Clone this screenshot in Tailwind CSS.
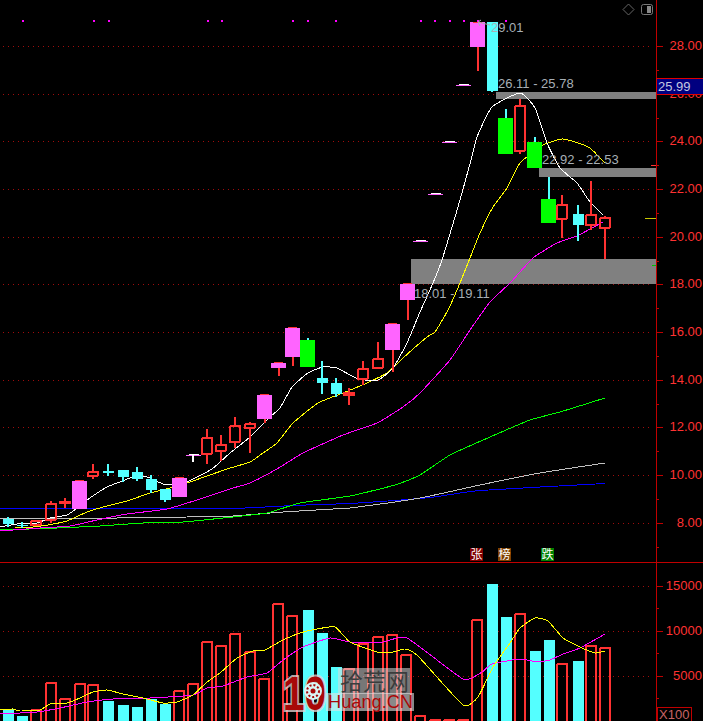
<!DOCTYPE html>
<html lang="zh">
<head>
  <meta charset="UTF-8">
  <title>K线图</title>
  <script src="https://cdn.jsdelivr.net/npm/@tailwindcss/browser@4"></script>
</head>
<body class="bg-black overflow-hidden">
  <div class="relative w-[703px] h-[721px] bg-black font-['Liberation_Sans','Noto_Sans_CJK_SC',sans-serif] text-[13px]">
    <svg id="chart" class="block" width="703" height="721" viewBox="0 0 703 721" xmlns="http://www.w3.org/2000/svg"></svg>
  </div>

  <script>
    const RED = '#ff3232', CYAN = '#54ffff', PINK = '#ff64ff', GREEN = '#00ff00';
    const AXIS = '#c00000', GRID = '#a00c0c', NOTE = '#a7afb6';

    // x, type, body top, body bottom, wick top, wick bottom
    const candles = [
      [8,'c',519,524,517,527],[22,'c',525,526,522,528],[36,'r',520,526,520,526],[51,'r',503,521,501,523],
      [65,'f',501,504,498,508],[79.5,'m',481,509,480,509],[93,'r',471,477,464,479],[108,'c',471,473,464,476],
      [122.5,'c',470,477,470,482],[136.5,'c',472,479,467,481],[150.5,'c',479,490,475,493],[164.5,'c',489,500,489,502],
      [179.5,'m',478,497,477,497],[207,'r',437,455,429,464],[221,'r',444,452,435,461],[235,'r',425,443,417,448],
      [250,'r',423,429,422,453],[264.5,'m',395,419,394,423],[278.5,'m',363,368,362,376],[292.5,'m',328,357,327,366],
      [307.5,'g',340,367,338,367],[321.5,'c',378,383,361,394],[335.5,'c',383,394,378,397],[349,'f',392,396,388,405],
      [363,'r',368,380,361,385],[378,'r',358,369,342,369],[392.5,'m',324,350,323,372],[407,'m',284,300,283,320],
      [477.5,'m',22,47,22,71],[491.5,'c',22,91,22,92],[505.5,'g',118,154,109,154],[520,'r',105,152,99,154],
      [534.5,'g',142,168,137,168],[548.5,'g',199,223,177,223],[562,'r',204,220,195,238],[577.5,'c',214,225,205,241],
      [591,'r',214,226,181,230],[605,'r',217,229,216,259]
    ];
    const dojis = [[193,455],[420.5,241],[435,194],[449.5,142],[463.5,85]];

    const lineWhite = [[0,527],[17,524],[37,523],[50,518],[67,515],[77,508],[87,500],[107,487],[120,482],[133,477],[147,477],[163,484],[172,484],[187,482],[212,469],[230,453],[250,437],[270,417],[280,408],[292,387],[308,373],[323,367],[337,368],[358,379],[378,380],[393,368],[407,343],[420,312],[433,283],[442,260],[452,227],[460,200],[471,160],[477,137],[492,107],[520,93],[535,108],[547,143],[560,168],[577,183],[590,202],[603,215]];
    const lineYellow = [[15,528],[33,527],[48,525],[67,521],[87,512],[107,506],[127,501],[150,493],[170,488],[190,482],[227,469],[250,462],[263,453],[277,443],[293,423],[318,403],[343,393],[367,383],[387,373],[403,358],[427,337],[435,332],[448,310],[460,283],[472,253],[480,233],[493,207],[507,188],[520,163],[543,145],[562,139],[575,142],[590,148],[605,163]];
    const linePink = [[0,531],[40,528],[70,526],[97,520],[127,514],[167,509],[200,499],[233,488],[250,483],[277,469],[303,453],[343,435],[377,423],[403,407],[420,393],[450,360],[470,330],[490,302],[510,283],[533,258],[557,243],[577,236],[603,222]];
    const lineGreen = [[0,530],[57,528],[100,526],[143,523],[183,522],[223,518],[267,513],[300,503],[350,496],[395,485],[420,475],[450,455],[490,437],[530,420],[560,412],[605,398]];
    const lineGrey = [[0,519],[117,518],[187,517],[233,516],[283,512],[333,509],[350,508],[420,498],[480,485],[540,473],[605,463]];
    const lineBlue = [[0,508.5],[227,508.5],[273,506.5],[317,504.5],[350,503.5],[430,497.5],[480,490.5],[605,483.5]];

    // x, type, top of volume bar
    const bars = [
      [8,'c',709],[22,'c',716],[36,'r',709],[51,'r',682],[65,'r',698],[79.5,'r',683],[93,'r',684],[108,'c',701],
      [122.5,'c',705],[136.5,'c',707],[150.5,'c',699],[164.5,'c',704],[179,'r',690],[193,'r',683],[207,'r',641],
      [221,'r',645],[235,'r',633],[250,'r',651],[264,'r',678],[278,'r',603],[292,'r',615],[307.5,'c',610],
      [321.5,'c',633],[335.5,'c',667],[349,'r',668],[363,'r',643],[378,'r',636],[392,'r',634],[406,'r',654],
      [420,'r',715],[435,'r',719],[449,'r',719],[463,'r',719],[477,'r',619],[491.5,'c',584],[505.5,'c',617],
      [520,'r',613],[534.5,'c',651],[548.5,'c',640],[562,'r',663],[577.5,'c',661],[591,'r',645],[605,'r',647]
    ];
    const volYellow = [[0,710],[13,709],[20,711],[40,710],[50,704],[67,703],[80,698],[93,692],[107,690],[123,694],[143,698],[163,703],[177,702],[193,695],[207,682],[220,673],[237,658],[253,651],[265,650],[283,640],[300,633],[317,629],[335,627],[350,642],[377,652],[393,652],[405,649],[418,656],[463,705],[478,697],[493,667],[510,643],[520,628],[535,618],[548,621],[563,638],[580,647],[595,653],[605,651]];
    const volPink = [[0,714],[37,712],[60,708],[87,702],[113,699],[150,698],[193,695],[207,688],[223,686],[247,677],[267,673],[283,660],[303,647],[330,638],[350,642],[383,642],[407,638],[463,679],[482,672],[492,664],[520,659],[537,662],[550,660],[563,654],[580,648],[605,634]];

    let s = '';
    const rect = (x, y, w, h, fill) => `<rect x="${x}" y="${y}" width="${w}" height="${h}" fill="${fill}" shape-rendering="crispEdges"/>`;
    const hollow = (x, y, w, h) => `<rect x="${x + 1}" y="${y + 1}" width="${w - 2}" height="${h - 2}" rx="1" fill="none" stroke="${RED}" stroke-width="2" shape-rendering="crispEdges"/>`;
    // lightly rounded through the points, drawn without antialiasing like the terminal does
    const poly = (pts, color) => {
      let d = `M${pts[0][0]} ${pts[0][1]}`;
      for (let i = 0; i < pts.length - 1; i++) {
        const p0 = pts[i - 1] || pts[i], p1 = pts[i], p2 = pts[i + 1], p3 = pts[i + 2] || p2;
        const c1 = [p1[0] + (p2[0] - p0[0]) / 12, p1[1] + (p2[1] - p0[1]) / 12];
        const c2 = [p2[0] - (p3[0] - p1[0]) / 12, p2[1] - (p3[1] - p1[1]) / 12];
        d += ` C${c1[0]} ${c1[1]} ${c2[0]} ${c2[1]} ${p2[0]} ${p2[1]}`;
      }
      return `<path d="${d}" fill="none" stroke="${color}" stroke-width="1" shape-rendering="crispEdges"/>`;
    };
    const text = (x, y, str, color, anchor) => `<text x="${x}" y="${y}" fill="${color}" text-anchor="${anchor || 'start'}">${str}</text>`;
    const grid = y => `<line x1="3" x2="650" y1="${y + 0.5}" y2="${y + 0.5}" stroke="${GRID}" stroke-dasharray="1 4" shape-rendering="crispEdges"/>`;

    // horizontal grid and right axis, price panel
    const prices = ['28.00','26.00','24.00','22.00','20.00','18.00','16.00','14.00','12.00','10.00','8.00'];
    prices.forEach((p, i) => {
      const y = Math.round(46 + i * 47.65);
      s += grid(y);
      s += rect(656, y, 7, 1, AXIS);
      s += rect(656, Math.round(y + 23.8), 3, 1, AXIS);
      s += text(702, y + 4, p, RED, 'end');
    });

    // volume panel
    [[586,'15000'],[631,'10000'],[676,'5000']].forEach(([y, v]) => {
      s += grid(y);
      s += rect(656, y, 7, 1, AXIS);
      s += rect(656, y + 22, 3, 1, AXIS);
      s += text(702, y + 4, v, RED, 'end');
    });

    // gaps
    s += rect(496, 92, 160, 7, '#808080');
    s += rect(539, 168, 117, 9, '#808080');
    s += rect(411, 259, 245, 25, '#808080');

    // moving averages
    s += poly(lineBlue, '#0000ff') + poly(lineGrey, '#c0c0c0') + poly(lineGreen, GREEN);
    s += poly(linePink, '#ff00ff') + poly(lineYellow, '#ffff00') + poly(lineWhite, '#ffffff');

    // candles
    candles.forEach(([x, t, top, bot, wt, wb]) => {
      if (t === 'r' || t === 'f') {
        const cx = Math.round(x);
        if (wt < top) s += rect(cx - 1, wt, 2, top - wt, RED);
        if (wb > bot) s += rect(cx - 1, bot, 2, wb - bot, RED);
        if (t === 'r') s += hollow(cx - 6, top, 12, bot - top);
        else s += rect(cx - 6, top, 12, bot - top, RED);
      } else if (t === 'c') {
        const cx = Math.round(x);
        s += rect(cx - 1, wt, 2, wb - wt, CYAN);
        s += rect(cx - 5, top, 11, bot - top, CYAN);
      } else if (t === 'm') {
        const l = Math.round(x - 7.5);
        s += rect(l + 7, bot, 2, wb - bot, RED);
        s += rect(l, top, 15, bot - top, PINK);
        s += rect(l + 3, wt, 9, 1, RED);
      } else {
        const l = Math.round(x - 7.5);
        s += rect(l + 7, wt, 2, top - wt, CYAN);
        s += rect(l, top, 15, bot - top, GREEN);
      }
    });
    dojis.forEach(([x, y]) => {
      const l = Math.round(x - 7.5);
      s += rect(l, y, 15, 1, PINK);
      s += rect(l + 3, y - 1, 10, 1, '#ffffff');
    });
    s += rect(192, 455, 2, 7, '#ffffff');

    // limit-up dots along the top
    [22,93,108,207,221,292,307,335,420,434,449,463,477,505].forEach(x => { s += rect(x, 20, 2, 2, '#ff00ff'); });

    // price notes
    s += `<path d="M478 22 L490 25 M478 22 L481 20 M478 22 L480 26" fill="none" stroke="${NOTE}"/>`;
    s += text(491, 32, '29.01', NOTE);
    s += text(498, 88, '26.11 - 25.78', NOTE);
    s += text(542, 164, '22.92 - 22.53', NOTE);
    s += text(414, 298, '18.01 - 19.11', NOTE);

    // marks against the axis
    s += rect(651, 165, 5, 1, RED) + rect(645, 218, 11, 1, '#c8c800') + rect(652, 265, 4, 1, '#00c000');

    // axis lines
    s += rect(656, 0, 1, 721, AXIS) + rect(0, 562, 703, 1, AXIS);

    // current price tag
    s += `<rect x="656.5" y="78.5" width="47" height="16" fill="#000080" stroke="#e00000" shape-rendering="crispEdges"/>`;
    s += text(658, 91, '25.99', '#c4c8e0');

    // window controls
    s += `<path d="M628.5 4 L634 9.5 L628.5 15 L623 9.5 Z" fill="none" stroke="#666666"/>`;
    s += `<rect x="641.5" y="4.5" width="11" height="10" rx="2" fill="none" stroke="#777777"/>` + rect(647, 6, 4, 7, '#888888');

    // signal badges
    [[470,'#800000','张'],[498,'#804000','榜'],[541,'#008000','跌']].forEach(([x, c, t]) => {
      s += rect(x, 548, 13, 13, c);
      s += `<text x="${x + 6.5}" y="559" fill="#ffffff" font-size="12" text-anchor="middle">${t}</text>`;
    });

    // volume bars and averages
    bars.forEach(([x, t, top]) => {
      const cx = Math.round(x);
      if (t === 'c') s += rect(cx - 5, top, 11, 723 - top, CYAN);
      else s += hollow(cx - 6, top, 12, 725 - top);
    });
    s += poly(volPink, '#ff00ff') + poly(volYellow, '#ffff00');

    // multiplier box
    s += `<rect x="657" y="707.5" width="34" height="14" fill="#000000" stroke="${AXIS}" shape-rendering="crispEdges"/>`;
    s += text(659, 719, 'X100', '#c86464');

    // watermark
    s += `<g>
      <rect x="338" y="668" width="72" height="26" fill="#d8d8d8" fill-opacity="0.55"/>
      <rect x="326" y="693" width="88" height="18" fill="#e4e4e4" fill-opacity="0.6"/>
      <text x="283" y="710" font-size="49" font-weight="700" fill="#a80808" stroke="#e0d0d0" stroke-opacity="0.8" stroke-width="4" paint-order="stroke" textLength="43" lengthAdjust="spacingAndGlyphs">10</text>
      <circle cx="313" cy="691" r="9" fill="#d8f4f4"/>
      <circle cx="313" cy="691" r="6" fill="none" stroke="#a80808" stroke-width="2" stroke-dasharray="2 2"/>
      <circle cx="313" cy="691" r="2.5" fill="#a80808"/>
      <text x="340" y="690" font-size="23" fill="#3c3c3c" textLength="69">拾荒网</text>
      <text x="328" y="708" font-size="19" fill="#a80808" textLength="85" lengthAdjust="spacingAndGlyphs">Huang.CN</text>
    </g>`;

    document.getElementById('chart').innerHTML = s;
  </script>
</body>
</html>
